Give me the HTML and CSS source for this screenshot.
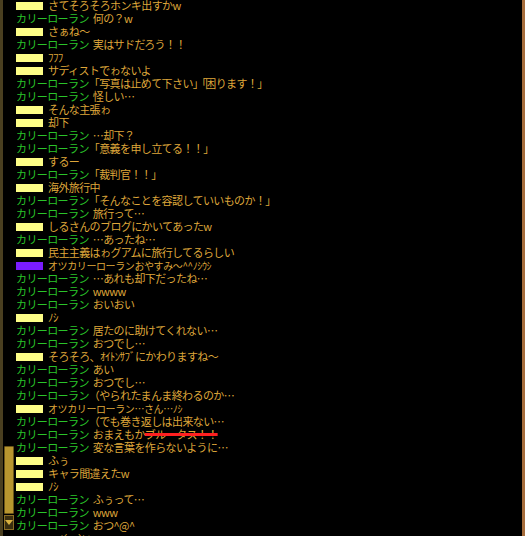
FILE: index.html
```html
<!DOCTYPE html>
<html lang="ja">
<head>
<meta charset="utf-8">
<title>chat log</title>
<link rel="stylesheet" href="styles.css">
</head>
<body>
<div class="frame">
  <div class="scroll">
    <div class="track">
      <div class="thumb"></div>
      <div class="down"><span class="tri"></span></div>
    </div>
  </div>
  <div class="log">
    <div class="row"><span class="blk"></span><span class="tx">さてそろそろホンキ出すかw</span></div>
    <div class="row"><span class="nm">カリーローラン</span><span class="tx">何の？w</span></div>
    <div class="row"><span class="blk"></span><span class="tx">さぁね～</span></div>
    <div class="row"><span class="nm">カリーローラン</span><span class="tx">実はサドだろう！！</span></div>
    <div class="row"><span class="blk"></span><span class="tx">ﾌﾌﾌ</span></div>
    <div class="row"><span class="blk"></span><span class="tx">サディストでゎないよ</span></div>
    <div class="row"><span class="nm">カリーローラン</span><span class="tx lb">「写真は止めて下さい<span class="pair">」「</span>困ります！」</span></div>
    <div class="row"><span class="nm">カリーローラン</span><span class="tx">怪しい…</span></div>
    <div class="row"><span class="blk"></span><span class="tx">そんな主張ゎ</span></div>
    <div class="row"><span class="blk"></span><span class="tx">却下</span></div>
    <div class="row"><span class="nm">カリーローラン</span><span class="tx">…却下？</span></div>
    <div class="row"><span class="nm">カリーローラン</span><span class="tx lb">「意義を申し立てる！！」</span></div>
    <div class="row"><span class="blk"></span><span class="tx">するー</span></div>
    <div class="row"><span class="nm">カリーローラン</span><span class="tx lb">「裁判官！！」</span></div>
    <div class="row"><span class="blk"></span><span class="tx">海外旅行中</span></div>
    <div class="row"><span class="nm">カリーローラン</span><span class="tx lb">「そんなことを容認していいものか！」</span></div>
    <div class="row"><span class="nm">カリーローラン</span><span class="tx">旅行って…</span></div>
    <div class="row"><span class="blk"></span><span class="tx">しるさんのブログにかいてあったw</span></div>
    <div class="row"><span class="nm">カリーローラン</span><span class="tx">…あったね…</span></div>
    <div class="row"><span class="blk"></span><span class="tx">民主主義はゎグアムに旅行してるらしい</span></div>
    <div class="row"><span class="blk purple"></span><span class="tx sm">オツカリーローランおやすみ～^^ﾉｼｳｼ</span></div>
    <div class="row"><span class="nm">カリーローラン</span><span class="tx">…あれも却下だったね…</span></div>
    <div class="row"><span class="nm">カリーローラン</span><span class="tx">wwww</span></div>
    <div class="row"><span class="nm">カリーローラン</span><span class="tx">おいおい</span></div>
    <div class="row"><span class="blk"></span><span class="tx">ﾉｼ</span></div>
    <div class="row"><span class="nm">カリーローラン</span><span class="tx">居たのに助けてくれない…</span></div>
    <div class="row"><span class="nm">カリーローラン</span><span class="tx">おつでし…</span></div>
    <div class="row"><span class="blk"></span><span class="tx">そろそろ、ｵｲﾄﾝｻﾌﾞにかわりますね～</span></div>
    <div class="row"><span class="nm">カリーローラン</span><span class="tx">あい</span></div>
    <div class="row"><span class="nm">カリーローラン</span><span class="tx">おつでし…</span></div>
    <div class="row"><span class="nm">カリーローラン</span><span class="tx lb">（やられたまんま終わるのか…</span></div>
    <div class="row"><span class="blk"></span><span class="tx sm">オツカリーローラン…さん…ﾉｼ</span></div>
    <div class="row"><span class="nm">カリーローラン</span><span class="tx lb">（でも巻き返しは出来ない…</span></div>
    <div class="row"><span class="nm">カリーローラン</span><span class="tx">おまえもか<span class="strike">ブルータス！！</span></span></div>
    <div class="row"><span class="nm">カリーローラン</span><span class="tx">変な言葉を作らないように…</span></div>
    <div class="row"><span class="blk"></span><span class="tx">ふぅ</span></div>
    <div class="row"><span class="blk"></span><span class="tx">キャラ間違えたw</span></div>
    <div class="row"><span class="blk"></span><span class="tx">ﾉｼ</span></div>
    <div class="row"><span class="nm">カリーローラン</span><span class="tx">ふぅって…</span></div>
    <div class="row"><span class="nm">カリーローラン</span><span class="tx">www</span></div>
    <div class="row"><span class="nm">カリーローラン</span><span class="tx">おつ^@^</span></div>
    <div class="row"><span class="tx indent">ヽ(´ー`)ﾉ</span></div>
  </div>
  <div class="edge"></div>
</div>
</body>
</html>
```

FILE: styles.css
```css
html, body {
  margin: 0;
  padding: 0;
  background: #000;
  height: 100%;
  overflow: hidden;
}

.frame {
  display: flex;
  width: 525px;
  height: 536px;
  background: #000;
  overflow: hidden;
}

.scroll {
  width: 14px;
  flex: 0 0 14px;
  display: flex;
}

.track {
  flex: 1;
  display: flex;
  flex-direction: column;
  border-left: 3px solid #4a3f20;
  padding: 0 1px 6px 1px;
}

.thumb {
  margin-top: auto;
  height: 66px;
  background: #b8962f;
  border: 1px solid #6a5418;
  border-radius: 1px;
}

.down {
  height: 13px;
  margin-top: 1px;
  background: #3a2e10;
  border: 1px solid #8a6d24;
  display: flex;
  align-items: center;
  justify-content: center;
}

.tri {
  width: 0;
  height: 0;
  border-left: 4px solid transparent;
  border-right: 4px solid transparent;
  border-top: 5px solid #d8b040;
}

.log {
  flex: 1;
  padding-left: 2px;
  margin-top: -1px;
  font-family: "Noto Sans CJK JP", "DejaVu Sans", sans-serif;
  font-size: 11px;
  line-height: 13px;
  letter-spacing: -0.6px;
  min-width: 0;
}

.row {
  height: 13px;
  white-space: nowrap;
  display: flex;
  align-items: center;
}

.blk {
  display: inline-block;
  width: 27px;
  height: 8px;
  margin-top: 1px;
  margin-right: 5px;
  background: #fdfd86;
  flex: 0 0 auto;
}

.blk.purple {
  background: #7a1cff;
}

.nm {
  color: #2ac42a;
  margin-right: 4px;
}

.tx {
  color: #dea63a;
}

.tx.lb {
  margin-left: -4px;
}

.pair {
  letter-spacing: -2px;
}

.tx.sm {
  font-size: 10px;
  letter-spacing: -0.4px;
}

.tx.indent {
  padding-left: 34px;
  font-size: 10px;
}

.strike {
  text-decoration: line-through;
  text-decoration-color: #ff2020;
  text-decoration-thickness: 3px;
}

.edge {
  width: 3px;
  flex: 0 0 3px;
  background: #a66d3c;
}
```
